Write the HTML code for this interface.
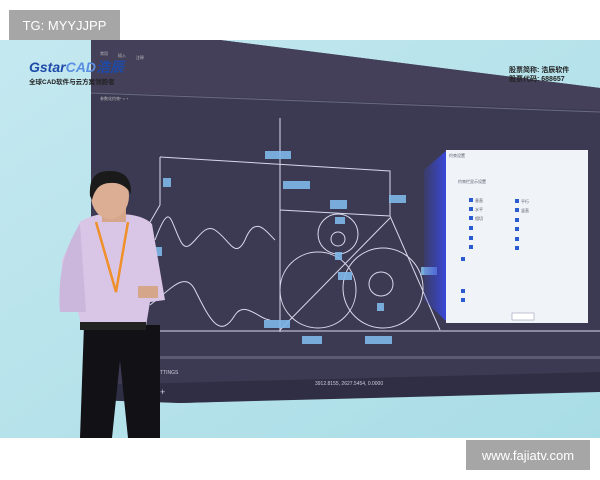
<!DOCTYPE html>
<html><head><meta charset="utf-8"><style>
body{margin:0;width:600px;height:480px;background:#fff;position:relative;overflow:hidden;font-family:"Liberation Sans","Noto Sans CJK SC",sans-serif}
.lab{position:absolute;background:#a6a6a6;color:#fff;font-size:13px;display:flex;align-items:center;justify-content:center}
</style></head><body>
<svg width="600" height="480" style="position:absolute;left:0;top:0">
<defs>
<linearGradient id="bg" x1="0" y1="0" x2="1" y2="1"><stop offset="0" stop-color="#c4e8f0"/><stop offset="1" stop-color="#a9dde6"/></linearGradient>
<linearGradient id="glow" x1="1" y1="0" x2="0" y2="0"><stop offset="0" stop-color="#3a49e0"/><stop offset="1" stop-color="#3845c8" stop-opacity="0.2"/></linearGradient>
</defs>
<rect x="0" y="40" width="600" height="398" fill="url(#bg)"/>
<polygon points="91,40 220,40 600,88 600,390 180,403 91,398" fill="#3c3a52"/>
<polygon points="91,40 220,40 600,88 600,110 91,92" fill="#45405a"/>
<line x1="91" y1="93" x2="600" y2="112" stroke="#6a6a80" stroke-width="1"/>
<g fill="#bbb" font-size="4"><text x="100" y="55">常用</text><text x="118" y="57">插入</text><text x="136" y="59">注释</text><text x="100" y="100">参数化约束*  ×  +</text></g>
<rect x="91" y="356" width="509" height="3" fill="#5a5a72"/>
<polygon points="91,385 600,372 600,392 180,403 91,400" fill="#2f2e44"/>
<text x="315" y="385" font-size="5" fill="#ccd">3912.8155, 2627.5454, 0.0000</text>
<text x="160" y="374" font-size="5" fill="#ccd">TTINGS</text>
<text x="160" y="395" font-size="9" fill="#ccd">+</text>
<g stroke="#d6d8ec" stroke-width="1" fill="none">
<polyline points="160,157 390,171 390,216 280,210"/>
<line x1="280" y1="118" x2="280" y2="332"/>
<polyline points="160,157 160,205 142,236"/>
<line x1="148" y1="331" x2="600" y2="331"/>
<path d="M155,240 C170,200 170,220 180,240 C190,262 200,220 215,230 C230,240 235,260 245,240 C255,215 265,230 275,240"/>
<path d="M150,305 C170,290 185,270 195,290 C210,320 220,340 235,315 C245,300 260,320 270,320"/>
<circle cx="338" cy="234" r="20"/><circle cx="338" cy="239" r="7"/>
<circle cx="318" cy="290" r="38"/><circle cx="383" cy="288" r="40"/><circle cx="381" cy="284" r="12"/>
<line x1="280" y1="330" x2="390" y2="218"/>
<line x1="390" y1="216" x2="440" y2="330"/>
</g>
<g fill="#7fb8e8" opacity=".9">
<rect x="265" y="151" width="26" height="8"/><rect x="283" y="181" width="27" height="8"/><rect x="163" y="178" width="8" height="9"/>
<rect x="330" y="200" width="17" height="9"/><rect x="335" y="217" width="10" height="7"/><rect x="335" y="252" width="7" height="8"/>
<rect x="338" y="272" width="14" height="8"/><rect x="389" y="195" width="17" height="8"/><rect x="421" y="267" width="16" height="8"/>
<rect x="264" y="320" width="26" height="8"/><rect x="302" y="336" width="20" height="8"/><rect x="365" y="336" width="27" height="8"/>
<rect x="377" y="303" width="7" height="8"/><rect x="155" y="247" width="7" height="9"/>
</g>
<polygon points="424,170 447,150 447,322 424,300" fill="url(#glow)"/>
<rect x="446" y="150" width="142" height="173" fill="#f0f3f8"/>
<g fill="#2a5bd0"><rect x="469" y="198" width="4" height="4"/><rect x="469" y="207" width="4" height="4"/><rect x="469" y="216" width="4" height="4"/><rect x="469" y="226" width="4" height="4"/><rect x="469" y="236" width="4" height="4"/><rect x="469" y="245" width="4" height="4"/>
<rect x="515" y="199" width="4" height="4"/><rect x="515" y="208" width="4" height="4"/><rect x="515" y="218" width="4" height="4"/><rect x="515" y="227" width="4" height="4"/><rect x="515" y="237" width="4" height="4"/><rect x="515" y="246" width="4" height="4"/>
<rect x="461" y="257" width="4" height="4"/><rect x="461" y="289" width="4" height="4"/><rect x="461" y="298" width="4" height="4"/></g>
<g fill="#556" font-size="4"><text x="449" y="157">约束设置</text><text x="458" y="183">约束栏显示设置</text><text x="475" y="202">垂直</text><text x="475" y="211">水平</text><text x="475" y="220">相切</text><text x="521" y="203">平行</text><text x="521" y="212">竖直</text></g>
<rect x="512" y="313" width="22" height="7" fill="#fff" stroke="#88a" stroke-width=".5"/>
<path d="M84,325 L160,325 L160,438 L128,438 L120,360 L112,438 L80,438 Z" fill="#111116"/>
<path d="M80,222 Q95,212 118,214 Q142,214 152,224 L165,300 L150,302 L146,326 L82,328 L78,312 L60,312 L62,260 Z" fill="#d9c6e6"/>
<path d="M60,312 Q56,260 80,224 L86,312 Z" fill="#cbb6dc"/>
<rect x="80" y="322" width="66" height="8" fill="#222"/>
<rect x="102" y="202" width="24" height="20" fill="#d6a68a"/>
<ellipse cx="110" cy="196" rx="19" ry="23" fill="#dcae93"/>
<path d="M90,196 Q88,170 110,171 Q132,171 131,194 Q124,182 110,183 Q96,183 92,200 Z" fill="#1a1a1a"/>
<path d="M96,222 L116,292 L128,222" stroke="#f0902a" stroke-width="2.5" fill="none"/>
<rect x="138" y="286" width="20" height="12" fill="#d6a68a"/>
<text x="29" y="72" font-size="14" font-weight="bold" font-style="italic" fill="#1e4aa8">Gstar<tspan fill="#5a8ee0">CAD</tspan><tspan fill="#1e4aa8">浩辰</tspan></text>
<text x="29" y="84" font-size="6.5" font-weight="bold" fill="#222">全球CAD软件与云方案领跑者</text>
<text x="509" y="72" font-size="7" font-weight="bold" fill="#222">股票简称: 浩辰软件</text>
<text x="509" y="81" font-size="7" font-weight="bold" fill="#222">股票代码: 688657</text>
</svg>
<div class="lab" style="left:9px;top:10px;width:111px;height:30px">TG: MYYJJPP</div>
<div class="lab" style="left:466px;top:440px;width:124px;height:30px">www.fajiatv.com</div>
</body></html>
